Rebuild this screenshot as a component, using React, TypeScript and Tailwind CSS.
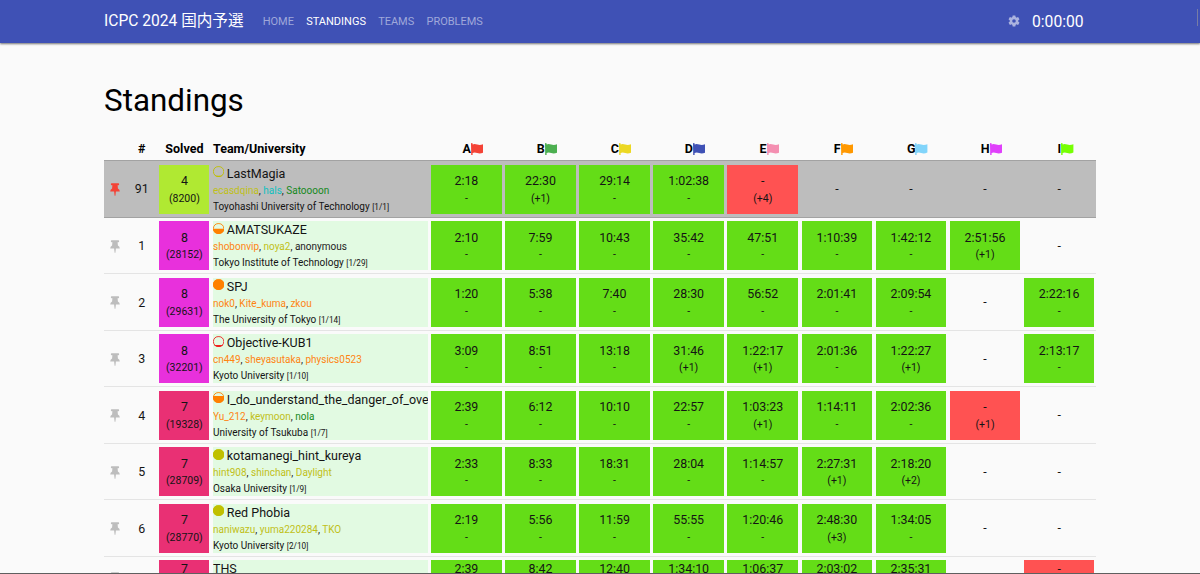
import React from "react";

const G = "text-[#14881c]";
const Y = "text-[#c0c018]";
const O = "text-[#ff8412]";
const C = "text-[#10c0c0]";
const K = "text-[#222]";

type Member = [string, string];
type Cell = [string, string, boolean?] | null;
type Ball = { color: string; fill: number } | null;
type Row = {
  rank: string;
  solved: string;
  penalty: string;
  bg: string;
  ball: Ball;
  name: string;
  members: Member[];
  univ: string;
  pos: string;
  cells: Cell[];
  pinned?: boolean;
  compact?: boolean;
};

const ok = (t: string, w = "-"): Cell => [t, w];
const ng = (w: string): Cell => ["-", w, true];

const PURPLE = "bg-[#e830dc]";
const PINK = "bg-[#e93074]";

const rows: Row[] = [
  {
    rank: "91", solved: "4", penalty: "(8200)", bg: "bg-[#b0e932]", pinned: true,
    ball: { color: "#c0c000", fill: 0.1 }, name: "LastMagia",
    members: [["ecasdqina", Y], ["hals", C], ["Satoooon", G]],
    univ: "Toyohashi University of Technology", pos: "[1/1]",
    cells: [ok("2:18"), ok("22:30", "(+1)"), ok("29:14"), ok("1:02:38"), ng("(+4)"), null, null, null, null],
  },
  {
    rank: "1", solved: "8", penalty: "(28152)", bg: PURPLE,
    ball: { color: "#ff8000", fill: 0.48 }, name: "AMATSUKAZE",
    members: [["shobonvip", O], ["noya2", Y], ["anonymous", K]],
    univ: "Tokyo Institute of Technology", pos: "[1/29]",
    cells: [ok("2:10"), ok("7:59"), ok("10:43"), ok("35:42"), ok("47:51"), ok("1:10:39"), ok("1:42:12"), ok("2:51:56", "(+1)"), null],
  },
  {
    rank: "2", solved: "8", penalty: "(29631)", bg: PURPLE,
    ball: { color: "#ff8000", fill: 1 }, name: "SPJ",
    members: [["nok0", O], ["Kite_kuma", O], ["zkou", O]],
    univ: "The University of Tokyo", pos: "[1/14]",
    cells: [ok("1:20"), ok("5:38"), ok("7:40"), ok("28:30"), ok("56:52"), ok("2:01:41"), ok("2:09:54"), null, ok("2:22:16")],
  },
  {
    rank: "3", solved: "8", penalty: "(32201)", bg: PURPLE,
    ball: { color: "#f02020", fill: 0.16 }, name: "Objective-KUB1",
    members: [["cn449", O], ["sheyasutaka", O], ["physics0523", O]],
    univ: "Kyoto University", pos: "[1/10]",
    cells: [ok("3:09"), ok("8:51"), ok("13:18"), ok("31:46", "(+1)"), ok("1:22:17", "(+1)"), ok("2:01:36"), ok("1:22:27", "(+1)"), null, ok("2:13:17")],
  },
  {
    rank: "4", solved: "7", penalty: "(19328)", bg: PINK,
    ball: { color: "#ff8000", fill: 0.65 }, name: "I_do_understand_the_danger_of_ove",
    members: [["Yu_212", O], ["keymoon", Y], ["nola", G]],
    univ: "University of Tsukuba", pos: "[1/7]",
    cells: [ok("2:39"), ok("6:12"), ok("10:10"), ok("22:57"), ok("1:03:23", "(+1)"), ok("1:14:11"), ok("2:02:36"), ng("(+1)"), null],
  },
  {
    rank: "5", solved: "7", penalty: "(28709)", bg: PINK,
    ball: { color: "#c0c000", fill: 1 }, name: "kotamanegi_hint_kureya",
    members: [["hint908", Y], ["shinchan", Y], ["Daylight", Y]],
    univ: "Osaka University", pos: "[1/9]",
    cells: [ok("2:33"), ok("8:33"), ok("18:31"), ok("28:04"), ok("1:14:57"), ok("2:27:31", "(+1)"), ok("2:18:20", "(+2)"), null, null],
  },
  {
    rank: "6", solved: "7", penalty: "(28770)", bg: PINK,
    ball: { color: "#c0c000", fill: 1 }, name: "Red Phobia",
    members: [["naniwazu", Y], ["yuma220284", Y], ["TKO", Y]],
    univ: "Kyoto University", pos: "[2/10]",
    cells: [ok("2:19"), ok("5:56"), ok("11:59"), ok("55:55"), ok("1:20:46"), ok("2:48:30", "(+3)"), ok("1:34:05"), null, null],
  },
  {
    rank: "7", solved: "7", penalty: "", bg: PINK, ball: null, name: "THS", compact: true,
    members: [], univ: "", pos: "",
    cells: [ok("2:39", ""), ok("8:42", ""), ok("12:40", ""), ok("1:34:10", ""), ok("1:06:37", ""), ok("2:03:02", ""), ok("2:35:31", ""), null, ng("")],
  },
];

const problems: [string, string][] = [
  ["A", "#f44336"], ["B", "#4caf50"], ["C", "#ecd823"], ["D", "#3f51b5"], ["E", "#f48fb1"],
  ["F", "#ff9800"], ["G", "#81d4fa"], ["H", "#e040fb"], ["I", "#76ff03"],
];

const GRID =
  "grid grid-cols-[30px_18.3px_50.2px_214.6px_repeat(9,70.6px)] gap-x-[3.5px] w-[992px]";

function Flag({ color }: { color: string }) {
  return (
    <svg className="block h-[12.5px] w-[12.5px]" viewBox="0 0 12.5 12.5" fill={color}>
      <path d="M0 .6Q0 0 .8 0Q1.6 0 1.6 .6V1.4Q3.5.5 6.2 1.5Q9 2.5 12.4 1.2V9.6Q9 11.1 6.2 10Q3.6 9 1.6 10V12.5H.2Z" />
    </svg>
  );
}

function Pin({ active }: { active?: boolean }) {
  return (
    <svg className="mt-[1px] block h-[13px] w-[10px]" viewBox="0 0 10 13" fill={active ? "#f44336" : "#bdbdbd"}>
      <path d="M.9.9Q.9.2 1.6.2H8.4Q9.1.2 9.1.9V1.5Q9.1 2.2 8.4 2.2H7.6L7.9 5.4Q9.8 6.4 9.8 8.4H5.9L5.4 12.8H4.6L4.1 8.4H.2Q.2 6.4 2.1 5.4L2.4 2.2H1.6Q.9 2.2.9 1.5Z" />
    </svg>
  );
}

function Gear() {
  return (
    <svg className="block h-[14px] w-[14px]" viewBox="0 0 24 24" fill="#abb3df">
      <path d="M19.14 12.94c.04-.3.06-.61.06-.94 0-.32-.02-.64-.07-.94l2.03-1.58a.49.49 0 0 0 .12-.61l-1.92-3.32a.488.488 0 0 0-.59-.22l-2.39.96c-.5-.38-1.03-.7-1.62-.94l-.36-2.54a.484.484 0 0 0-.48-.41h-3.84c-.24 0-.43.17-.47.41l-.36 2.54c-.59.24-1.13.57-1.62.94l-2.39-.96c-.22-.08-.47 0-.59.22L2.74 8.87c-.12.21-.08.47.12.61l2.03 1.58c-.05.3-.09.63-.09.94s.02.64.07.94l-2.03 1.58a.49.49 0 0 0-.12.61l1.92 3.32c.12.22.37.29.59.22l2.39-.96c.5.38 1.03.7 1.62.94l.36 2.54c.05.24.24.41.48.41h3.84c.24 0 .44-.17.47-.41l.36-2.54c.59-.24 1.13-.56 1.62-.94l2.39.96c.22.08.47 0 .59-.22l1.92-3.32c.12-.22.07-.47-.12-.61l-2.01-1.58zM12 15.1A3.1 3.1 0 1 1 12 8.9a3.1 3.1 0 0 1 0 6.2z" />
    </svg>
  );
}

function RatingBall({ color, fill, id }: { color: string; fill: number; id: string }) {
  const top = 0.2 + 10.5 * (1 - fill);
  return (
    <svg className="-mt-[3px] mr-[2.6px] block h-[11px] w-[11.2px] shrink-0" viewBox="0 0 11.2 11">
      <clipPath id={id}>
        <rect x="0" y={top} width="11.2" height="11" />
      </clipPath>
      <rect x=".45" y=".6" width="10.3" height="9.9" rx="4.7" fill="none" stroke={color} strokeWidth=".9" />
      <rect x="0" y=".15" width="11.2" height="10.8" rx="5.1" fill={color} clipPath={`url(#${id})`} />
    </svg>
  );
}

function Lines({ first, second, compact, bg }: { first: string; second: string; compact?: boolean; bg: string }) {
  return (
    <div className={`flex flex-col items-center ${compact ? "h-[35px]" : "h-[49px] pt-[7.6px]"} ${bg}`}>
      <div className="h-[17.5px] text-[12.4px] leading-[17.5px]">{first}</div>
      <div className="h-[17px] text-[10.5px] leading-[17px]">{second}</div>
    </div>
  );
}

function ProblemCell({ cell, compact }: { cell: Cell; compact?: boolean }) {
  if (!cell) {
    return (
      <div className={`flex items-center justify-center text-[12.4px] ${compact ? "h-[35px]" : "h-[49px]"}`}>
        {compact ? "" : "-"}
      </div>
    );
  }
  const [time, wrong, failed] = cell;
  return <Lines first={time} second={wrong} compact={compact} bg={failed ? "bg-[#ff5252]" : "bg-[#64dd17]"} />;
}

function StandingRow({ row }: { row: Row }) {
  const h = row.compact ? "h-[35px]" : "h-[49px]";
  return (
    <div
      className={`${GRID} items-start ${
        row.pinned
          ? "h-[57.2px] border-y border-[#a2a2a2] bg-[#bdbdbd] pt-[3.2px]"
          : "h-[56.5px] border-b border-[#e4e4e4] pt-[3.8px]"
      }`}
    >
      <div className={`flex items-center pl-[5.5px] ${h}`}>
        <Pin active={row.pinned} />
      </div>
      <div className={`-ml-[12px] flex items-center justify-center pl-[2px] pt-px text-[12.4px] ${h}`}>{row.rank}</div>
      <Lines first={row.solved} second={row.penalty} compact={row.compact} bg={row.bg} />
      <div className={`overflow-hidden whitespace-nowrap ${h} ${row.pinned ? "" : "bg-[#e2fae2]"}`}>
        <div className="flex h-[17.1px] items-center text-[12.5px] leading-[17.1px]">
          {row.ball && <RatingBall color={row.ball.color} fill={row.ball.fill} id={`ball-${row.rank}`} />}
          <span>{row.name}</span>
        </div>
        <div className="h-[17px] text-[10px] leading-[17px]">
          {row.members.map(([name, color], i) => (
            <React.Fragment key={name}>
              {i > 0 && ", "}
              <span className={color}>{name}</span>
            </React.Fragment>
          ))}
        </div>
        <div className="h-[15px] text-[10px] leading-[16px]">
          {row.univ} <span className="text-[8.2px]">{row.pos}</span>
        </div>
      </div>
      {row.cells.map((cell, i) => (
        <ProblemCell key={i} cell={cell} compact={row.compact} />
      ))}
    </div>
  );
}

export default function App() {
  return (
    <div className="relative flex h-[574px] w-[1200px] flex-col overflow-hidden bg-[#fafafa] font-['Roboto','Noto_Sans_CJK_JP',sans-serif] text-[#141414]">
      <nav className="flex h-[43px] shrink-0 items-center bg-[#3f51b5] pl-[104px] text-[11px] text-[#9fa8da] shadow-[0_1px_2px_rgba(0,0,0,0.55)]">
        <span className="mt-px w-[158.7px] whitespace-nowrap text-[15.6px] text-white">ICPC 2024 国内予選</span>
        <div className="mt-px flex gap-[12.2px]">
          <a>HOME</a>
          <a className="text-white">STANDINGS</a>
          <a>TEAMS</a>
          <a>PROBLEMS</a>
        </div>
        <div className="ml-auto flex items-center pr-[2px]">
          <Gear />
          <span className="ml-[11px] w-[165px] text-[15.7px] text-white">0:00:00</span>
          <span className="-mt-[8px] h-[17px] w-px bg-[#777ca5]" />
        </div>
      </nav>
      <main className="pl-[104px]">
        <h1 className="mt-[37px] h-[42px] text-[31.4px] leading-[42px] text-black">Standings</h1>
        <div className={`${GRID} mt-[16px] h-[22.4px] items-center text-[12.5px] font-bold text-black`}>
          <div />
          <div className="-ml-[12px] pl-[2px] text-center">#</div>
          <div className="text-center">Solved</div>
          <div>Team/University</div>
          {problems.map(([letter, color]) => (
            <div key={letter} className="flex items-center justify-center pl-[13px]">
              <span>{letter}</span>
              <Flag color={color} />
            </div>
          ))}
        </div>
        {rows.map((row) => (
          <StandingRow key={row.rank} row={row} />
        ))}
      </main>
      <div className="absolute inset-x-0 bottom-0 h-px bg-[#5f5f5f]" />
    </div>
  );
}
